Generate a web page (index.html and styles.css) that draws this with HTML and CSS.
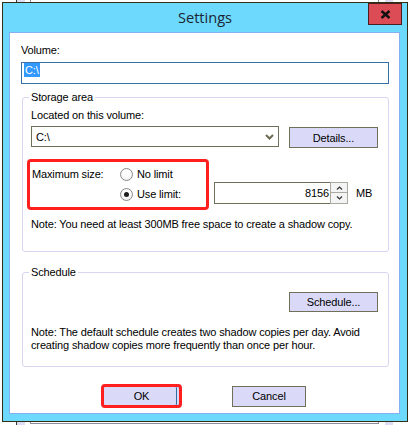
FILE: index.html
```html
<!DOCTYPE html>
<html>
<head>
<meta charset="utf-8">
<title>Settings</title>
<link rel="stylesheet" href="styles.css">
</head>
<body>
<div class="desk">
  <div class="bg-scroll"></div>
  <div class="bg-list"></div>
  <div class="bg-scroll-right"></div>
  <div class="window">
    <div class="titlebar">
      <span class="title">Settings</span>
      <div class="close">
        <svg width="11" height="9" viewBox="0 0 11 9"><path d="M1.5 1 L9.5 8 M9.5 1 L1.5 8" stroke="#111" stroke-width="2.4" fill="none"/></svg>
      </div>
    </div>
    <div class="client">
      <div class="label">Volume:</div>
      <div class="volume"><span class="sel">C:\</span></div>

      <fieldset class="group storage">
        <legend>Storage area</legend>
        <div class="label">Located on this volume:</div>
        <div class="row">
          <div class="combo">
            <span>C:\</span>
            <svg class="drop" width="9" height="6" viewBox="0 0 9 6"><path d="M1 1 L4.5 4.5 L8 1" stroke="#6b6b50" stroke-width="2" fill="none"/></svg>
          </div>
          <div class="btn details">Details...</div>
        </div>
        <div class="sizerow">
          <div class="mark">
            <span class="size-label">Maximum size:</span>
            <div class="radios">
              <div class="radio"><span class="circle"></span>No limit</div>
              <div class="radio"><span class="circle checked"></span>Use limit:</div>
            </div>
          </div>
          <div class="spin">
            <div class="num">8156</div>
            <div class="arrows">
              <div class="arrow"><svg width="7" height="4" viewBox="0 0 7 4"><path d="M1 3.5 L3.5 1 L6 3.5" stroke="#333" stroke-width="1.2" fill="none"/></svg></div>
              <div class="arrow"><svg width="7" height="4" viewBox="0 0 7 4"><path d="M1 0.5 L3.5 3 L6 0.5" stroke="#333" stroke-width="1.2" fill="none"/></svg></div>
            </div>
          </div>
          <span class="unit">MB</span>
        </div>
        <p class="note">Note: You need at least 300MB free space to create a shadow copy.</p>
      </fieldset>

      <fieldset class="group schedule">
        <legend>Schedule</legend>
        <div class="row right">
          <div class="btn sched">Schedule...</div>
        </div>
        <p class="note two">Note: The default schedule creates two shadow copies per day. Avoid<br>creating shadow copies more frequently than once per hour.</p>
      </fieldset>

      <div class="actions">
        <div class="btn ok">OK</div>
        <div class="btn cancel">Cancel</div>
      </div>
    </div>
  </div>
</div>
</body>
</html>
```

FILE: styles.css
```css
* { box-sizing: border-box; }
html, body { margin: 0; padding: 0; background: #fff; }
body {
  width: 411px;
  height: 425px;
  overflow: hidden;
  font-family: "Liberation Sans", Arial, sans-serif;
  font-size: 11px;
  letter-spacing: -0.14px;
  color: #000;
}
.desk {
  position: relative;
  width: 411px;
  height: 425px;
  padding: 2px 0 0 2px;
}
/* background window pieces peeking out */
.bg-scroll {
  position: absolute;
  left: 16px; top: -4px;
  width: 9px; height: 440px;
  background: #dcdcf6;
  border-left: 1px solid #3a3a2a;
}
.bg-list {
  position: absolute;
  left: 30px; top: -10px;
  width: 349px; height: 434px;
  border: 1px solid #8c8c9c;
}
.bg-scroll-right {
  position: absolute;
  left: 385px; top: -4px;
  width: 8px; height: 440px;
  background: #dcdcf6;
}
.window {
  position: relative;
  width: 406px;
  height: 420px;
  border: 1px solid #2f2f14;
  background: #6cd9fd;
  display: flex;
  flex-direction: column;
}
.titlebar {
  height: 29px;
  display: flex;
  justify-content: center;
  align-items: center;
}
.title {
  font-family: "Open Sans", "Noto Sans", sans-serif;
  font-size: 14.6px;
  letter-spacing: 0;
  line-height: 29px;
  color: #1b2634;
}
.close {
  position: absolute;
  top: 0;
  right: 5px;
  width: 34px;
  height: 22px;
  background: #dc4c57;
  border: 1px solid #4b1e1e;
  display: flex;
  align-items: center;
  justify-content: center;
}
.client {
  margin: 0 7px 0 6px;
  height: 382px;
  border: 1px solid #86aef0;
  background: #fff;
  padding: 11px 10px 0 11px;
}
.label { line-height: 13px; }
.volume {
  margin-top: 5px;
  width: 368px;
  height: 22px;
  border: 1px solid #3672a8;
  padding: 0 0 0 2px;
}
.sel {
  display: inline-block;
  background: #3399ff;
  color: #fff;
  line-height: 14px;
  padding: 0 1px;
}
.group {
  margin: 7px 0 0 1px;
  width: 367px;
  border: 1px solid #d6d6f0;
  border-radius: 3px;
  padding: 5px 10px 20px 8px;
  min-width: 0;
}
.group legend {
  padding: 0 2px;
  margin-left: -2px;
  line-height: 13px;
}
.row {
  display: flex;
  margin-top: 4px;
}
.row.right { justify-content: flex-end; margin-top: 8px; }
.combo {
  width: 248px;
  height: 21px;
  border: 1px solid #6f6f5a;
  display: flex;
  align-items: center;
  justify-content: space-between;
  padding: 0 4px 0 4px;
}
.btn {
  height: 21px;
  border: 1px solid #6f6f5a;
  background: #dadaf8;
  display: flex;
  align-items: center;
  justify-content: center;
}
.details { width: 89px; margin: 1px 0 0 10px; }
.sched { width: 89px; height: 20px; }
.sizerow {
  display: flex;
  align-items: flex-start;
  margin: 11px 0 0 -4px;
}
.mark {
  width: 182px;
  height: 51px;
  border: 3px solid #ff1f1f;
  border-radius: 4px;
  display: flex;
  padding: 6px 0 0 2px;
}
.size-label {
  width: 88px;
  line-height: 13px;
}
.radios {
  display: flex;
  flex-direction: column;
  gap: 7px;
}
.radio {
  display: flex;
  align-items: center;
  line-height: 13px;
  gap: 4px;
}
.circle {
  width: 13px;
  height: 13px;
  border-radius: 50%;
  border: 1px solid #8a8a8a;
  background: radial-gradient(circle at 50% 40%, #fff 30%, #e6e6e6 100%);
  display: flex;
  align-items: center;
  justify-content: center;
}
.circle.checked::after {
  content: "";
  width: 5px;
  height: 5px;
  border-radius: 50%;
  background: #1d1d1d;
}
.spin {
  display: flex;
  margin: 23px 0 0 5px;
}
.num {
  width: 116px;
  height: 22px;
  border: 1px solid #6f6f5a;
  border-right: none;
  text-align: right;
  line-height: 20px;
  padding-right: 1px;
}
.arrows {
  width: 18px;
  height: 22px;
  display: flex;
  flex-direction: column;
}
.arrow {
  height: 11px;
  border: 1px solid #a9a9a0;
  background: #f4f4f4;
  display: flex;
  align-items: center;
  justify-content: center;
}
.arrow + .arrow { border-top: none; }
.unit {
  margin: 28px 0 0 8px;
  line-height: 13px;
}
.note {
  margin: 8px 0 0 0;
  line-height: 13px;
}
.schedule {
  margin-top: 14px;
  padding-bottom: 14px;
}
.note.two { margin-top: 14px; }
.actions {
  display: flex;
  align-items: center;
  margin-top: 17px;
}
.ok {
  margin-left: 80px;
  width: 81px;
  height: 24px;
  border: 3px solid #ff1f1f;
  border-radius: 4px;
  box-shadow: inset -2px 0 0 #dadaf8, inset -3px 0 0 #2e6da4;
}
.cancel {
  margin-left: 50px;
  width: 74px;
}
```
